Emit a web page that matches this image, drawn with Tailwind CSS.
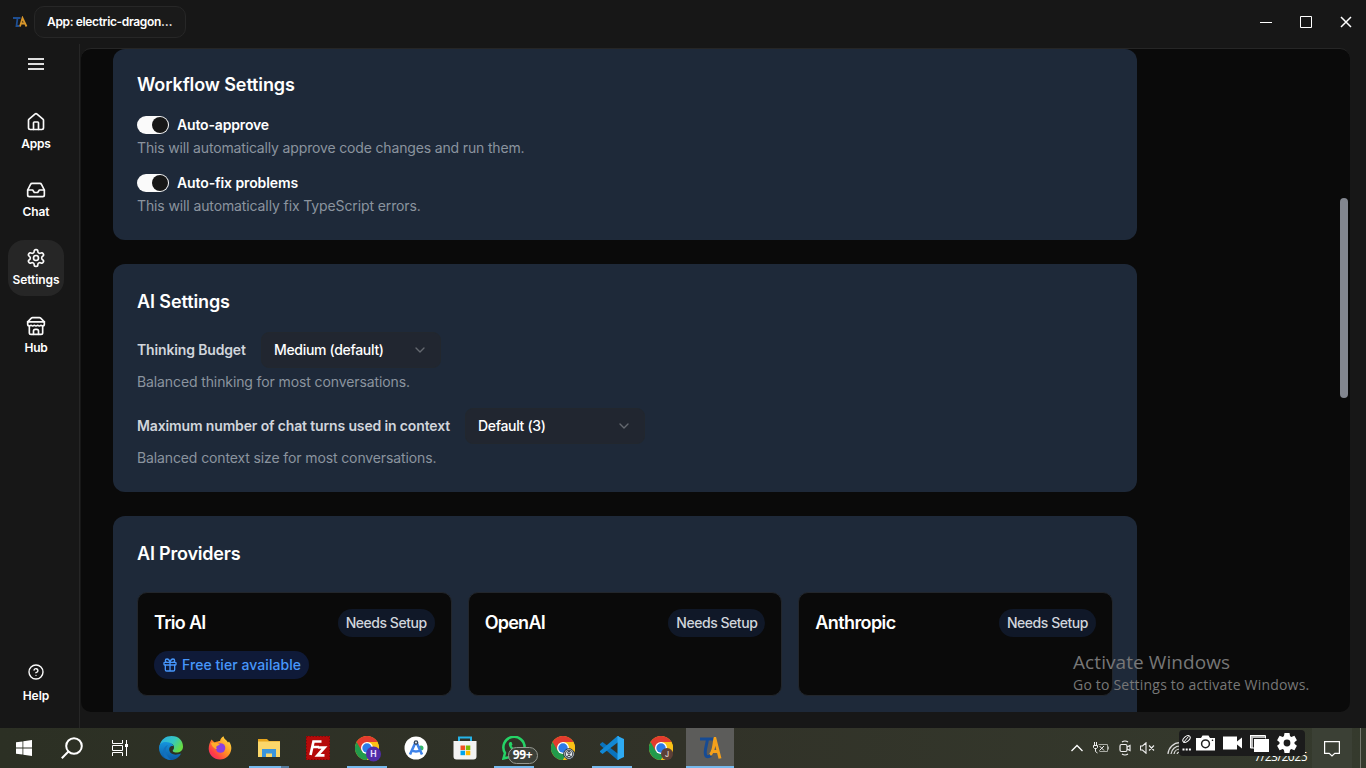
<!DOCTYPE html>
<html lang="en">
<head>
<meta charset="utf-8">
<title>Settings</title>
<script src="https://cdn.jsdelivr.net/npm/@tailwindcss/browser@4"></script>
</head>
<body class="w-[1366px] h-[768px] overflow-hidden bg-[#171717] text-white font-['Inter','Liberation_Sans',sans-serif] flex flex-col relative">
<header class="h-[44px] shrink-0 flex items-center pl-[13px]">
  <svg class="w-[15px] h-[12px] shrink-0 mr-[6px]" viewBox="0 0 15 12" fill="none" stroke-width="1.800"><path d="M0 2h7.500M4.500 2L3.500 10h3" stroke="#1f4f93"/><path d="M7 10.500L9.500 2L13.500 10.500M8 7.500h4.500" stroke="#d8962b"/></svg>
  <div class="w-[152px] h-8 rounded-[10px] border border-[#272727] bg-[#1a1a1a] px-3 flex items-center text-[12px] font-semibold whitespace-nowrap"><span class="tracking-[-0.35px]">App: electric-dragon…</span></div>
  <div class="ml-auto flex items-center gap-7 pr-[14px]">
    <svg class="w-3 h-3" viewBox="0 0 12 12" stroke="#fff"><path d="M0 6.500h12"/></svg>
    <svg class="w-3 h-3" viewBox="0 0 12 12" stroke="#fff" fill="none"><path d="M.5.500h11v11H.5z"/></svg>
    <svg class="w-3 h-3" viewBox="0 0 12 12" stroke="#fff" stroke-width="1.500"><path d="M1 1l10 10M11 1L1 11"/></svg>
  </div>
</header>
<div class="h-[684px] flex shrink-0">
  <nav class="w-20 shrink-0 border-r border-[#262626] flex flex-col pl-2 text-[12px] font-semibold">
    <div class="w-14 h-10 flex items-center justify-center"><svg class="w-4 h-3" viewBox="0 0 16 12" fill="#dedede"><path d="M0 0h16v2H0zM0 5h16v2H0zM0 10h16v2H0z"/></svg></div>
    <div class="mt-5 flex flex-col gap-3">
      <div class="w-14 h-14 flex flex-col items-center pt-2 gap-1"><svg class="w-5 h-5" viewBox="0 0 24 24" fill="none" stroke="#fafafa" stroke-width="2" stroke-linecap="round" stroke-linejoin="round"><path d="M15 21v-8a1 1 0 0 0-1-1h-4a1 1 0 0 0-1 1v8"/><path d="M3 10a2 2 0 0 1 .709-1.528l7-5.999a2 2 0 0 1 2.582 0l7 5.999A2 2 0 0 1 21 10v9a2 2 0 0 1-2 2H5a2 2 0 0 1-2-2z"/></svg><span class="leading-4 tracking-[-0.2px]">Apps</span></div>
      <div class="w-14 h-14 flex flex-col items-center pt-2 gap-1"><svg class="w-5 h-5" viewBox="0 0 24 24" fill="none" stroke="#fafafa" stroke-width="2" stroke-linecap="round" stroke-linejoin="round"><path d="M22 12h-6l-2 3h-4l-2-3H2"/><path d="M5.450 5.110 2 12v6a2 2 0 0 0 2 2h16a2 2 0 0 0 2-2v-6l-3.450-6.890A2 2 0 0 0 16.760 4H7.240a2 2 0 0 0-1.790 1.110z"/></svg><span class="leading-4 tracking-[-0.1px]">Chat</span></div>
      <div class="w-14 h-14 flex flex-col items-center pt-2 gap-1 rounded-2xl bg-[#262626]"><svg class="w-5 h-5" viewBox="0 0 24 24" fill="none" stroke="#fafafa" stroke-width="2" stroke-linecap="round" stroke-linejoin="round"><path d="M12.220 2h-.44a2 2 0 0 0-2 2v.18a2 2 0 0 1-1 1.730l-.43.25a2 2 0 0 1-2 0l-.15-.08a2 2 0 0 0-2.730.73l-.22.38a2 2 0 0 0 .73 2.730l.15.1a2 2 0 0 1 1 1.720v.51a2 2 0 0 1-1 1.740l-.15.09a2 2 0 0 0-.73 2.730l.22.38a2 2 0 0 0 2.730.73l.15-.08a2 2 0 0 1 2 0l.43.25a2 2 0 0 1 1 1.730V20a2 2 0 0 0 2 2h.44a2 2 0 0 0 2-2v-.18a2 2 0 0 1 1-1.730l.43-.25a2 2 0 0 1 2 0l.15.08a2 2 0 0 0 2.730-.73l.22-.39a2 2 0 0 0-.73-2.730l-.15-.08a2 2 0 0 1-1-1.740v-.5a2 2 0 0 1 1-1.740l.15-.09a2 2 0 0 0 .73-2.730l-.22-.38a2 2 0 0 0-2.730-.73l-.15.08a2 2 0 0 1-2 0l-.43-.25a2 2 0 0 1-1-1.730V4a2 2 0 0 0-2-2z"/><circle cx="12" cy="12" r="3"/></svg><span class="leading-4 tracking-[-0.1px]">Settings</span></div>
      <div class="w-14 h-14 flex flex-col items-center pt-2 gap-1"><svg class="w-5 h-5" viewBox="0 0 24 24" fill="none" stroke="#fafafa" stroke-width="2" stroke-linecap="round" stroke-linejoin="round"><path d="m2 7 4.410-4.410A2 2 0 0 1 7.830 2h8.340a2 2 0 0 1 1.420.59L22 7"/><path d="M4 12v8a2 2 0 0 0 2 2h12a2 2 0 0 0 2-2v-8"/><path d="M15 22v-4a2 2 0 0 0-2-2h-2a2 2 0 0 0-2 2v4M2 7h20"/><path d="M22 7v3a2 2 0 0 1-2 2a2.700 2.700 0 0 1-1.590-.63.7.7 0 0 0-.82 0A2.700 2.700 0 0 1 16 12a2.700 2.700 0 0 1-1.590-.63.7.7 0 0 0-.82 0A2.700 2.700 0 0 1 12 12a2.700 2.700 0 0 1-1.590-.63.7.7 0 0 0-.82 0A2.700 2.700 0 0 1 8 12a2.700 2.700 0 0 1-1.590-.63.7.7 0 0 0-.82 0A2.700 2.700 0 0 1 4 12a2 2 0 0 1-2-2V7"/></svg><span class="leading-4 tracking-[-0.2px]">Hub</span></div>
    </div>
    <div class="mt-auto mb-6 w-14 flex flex-col items-center gap-2"><svg class="w-4 h-4" viewBox="0 0 24 24" fill="none" stroke="#fafafa" stroke-width="2.100" stroke-linecap="round" stroke-linejoin="round"><circle cx="12" cy="12" r="10.500"/><path d="M9.090 9a3 3 0 0 1 5.830 1c0 2-3 3-3 3M12 17h.01"/></svg><span class="leading-4">Help</span></div>
  </nav>
  <main class="ml-px mt-1 w-[1269px] h-[664px] rounded-[10px] border-t border-[#262626] bg-[#0a0a0a] overflow-hidden flex">
    <div class="ml-8 w-[1024px] shrink-0 text-[14px] leading-5">
      <section class="h-[191px] rounded-xl bg-[#1e2939] px-6 pt-[22px]">
        <h2 class="text-[18px] leading-7 font-[580]"><span class="tracking-[-0.1px]">Workflow Settings</span></h2>
        <div class="mt-4 h-5 flex items-center gap-2"><span class="w-8 h-[18.400px] rounded-full bg-[#fafafa] flex items-center justify-end pr-px"><i class="w-4 h-4 rounded-full bg-[#171717]"></i></span><span class="font-[570] tracking-[-0.16px]">Auto-approve</span></div>
        <p class="mt-[3px] text-[#8b949f]"><span class="tracking-[-0.155px]">This will automatically approve code changes and run them.</span></p>
        <div class="mt-[15px] h-5 flex items-center gap-2"><span class="w-8 h-[18.400px] rounded-full bg-[#fafafa] flex items-center justify-end pr-px"><i class="w-4 h-4 rounded-full bg-[#171717]"></i></span><span class="font-[570] tracking-[-0.1px]">Auto-fix problems</span></div>
        <p class="mt-[3px] text-[#8b949f]"><span class="tracking-[-0.115px]">This will automatically fix TypeScript errors.</span></p>
      </section>
      <section class="mt-6 h-[228px] rounded-xl bg-[#1e2939] px-6 pt-6">
        <h2 class="text-[18px] leading-7 font-[580] tracking-[-0.1px]">AI Settings</h2>
        <div class="mt-4 h-9 flex items-center"><span class="w-[124px] font-[560] tracking-[-0.15px] text-[#d1d5dc]">Thinking Budget</span>
          <div class="w-[180px] h-9 rounded-lg border border-[#22272e] bg-[#212630] px-3 flex items-center justify-between font-[540]"><span class="tracking-[-0.32px]">Medium (default)</span><svg class="w-4 h-4" viewBox="0 0 24 24" fill="none" stroke="#646870" stroke-width="2" stroke-linecap="round" stroke-linejoin="round"><path d="m6 9 6 6 6-6"/></svg></div></div>
        <p class="mt-1 text-[#8b949f]"><span class="tracking-[-0.11px]">Balanced thinking for most conversations.</span></p>
        <div class="mt-4 h-9 flex items-center"><span class="w-[328px] font-[560] tracking-[-0.14px] text-[#d1d5dc] whitespace-nowrap">Maximum number of chat turns used in context</span>
          <div class="w-[180px] h-9 rounded-lg border border-[#22272e] bg-[#212630] px-3 flex items-center justify-between font-[540]"><span class="tracking-[-0.32px]">Default (3)</span><svg class="w-4 h-4" viewBox="0 0 24 24" fill="none" stroke="#646870" stroke-width="2" stroke-linecap="round" stroke-linejoin="round"><path d="m6 9 6 6 6-6"/></svg></div></div>
        <p class="mt-1 text-[#8b949f]"><span class="tracking-[-0.12px]">Balanced context size for most conversations.</span></p>
      </section>
      <section class="mt-6 h-[240px] rounded-xl bg-[#1e2939] px-6 pt-6">
        <h2 class="text-[18px] leading-7 font-[580] tracking-[-0.2px]">AI Providers</h2>
        <div class="mt-6 grid grid-cols-3 gap-4">
          <div class="h-[104px] rounded-[10px] border border-[#22262c] bg-[#0a0a0a] p-4">
            <div class="h-7 flex items-center justify-between"><h3 class="text-[18px] font-[570] tracking-[-0.7px]">Trio AI</h3><span class="h-7 px-2 rounded-full bg-[#101828] text-[#d1d5dc] font-medium leading-7 tracking-[-0.46px]">Needs Setup</span></div>
            <div class="mt-[14px] w-[155px] h-7 px-2 rounded-full bg-[#0f1a38] text-[#4797fb] font-medium flex items-center gap-1 whitespace-nowrap"><svg class="w-4 h-4 shrink-0" viewBox="0 0 24 24" fill="none" stroke="currentColor" stroke-width="2" stroke-linecap="round" stroke-linejoin="round"><rect x="3" y="8" width="18" height="4" rx="1"/><path d="M12 8v13M19 12v7a2 2 0 0 1-2 2H7a2 2 0 0 1-2-2v-7M7.500 8a2.500 2.500 0 0 1 0-5A4.800 8 0 0 1 12 8a4.800 8 0 0 1 4.500-5 2.500 2.500 0 0 1 0 5"/></svg><span class="tracking-[0.06px]">Free tier available</span></div>
          </div>
          <div class="h-[104px] rounded-[10px] border border-[#22262c] bg-[#0a0a0a] p-4">
            <div class="h-7 flex items-center justify-between"><h3 class="text-[18px] font-[570] tracking-[-0.75px]">OpenAI</h3><span class="h-7 px-2 rounded-full bg-[#101828] text-[#d1d5dc] font-medium leading-7 tracking-[-0.46px]">Needs Setup</span></div>
          </div>
          <div class="h-[104px] rounded-[10px] border border-[#22262c] bg-[#0a0a0a] p-4">
            <div class="h-7 flex items-center justify-between"><h3 class="text-[18px] font-[570] tracking-[-0.6px]">Anthropic</h3><span class="h-7 px-2 rounded-full bg-[#101828] text-[#d1d5dc] font-medium leading-7 tracking-[-0.46px]">Needs Setup</span></div>
          </div>
        </div>
      </section>
    </div>
    <div class="ml-auto mr-[2px] mt-[149px] w-2 h-[200px] rounded-full bg-[#82868f]"></div>
  </main>
</div>
<footer class="h-10 shrink-0 bg-linear-to-r from-[#2c3024] via-[#313228] to-[#353a2d] flex items-center">
  <div class="w-12 flex justify-center"><svg class="w-4 h-4" viewBox="0 0 16 16" fill="#fff"><path d="M0 2.300L6.500 1.400V7.600H0zM7.300 1.300L16 0V7.600H7.300zM0 8.400H6.500V14.600L0 13.700zM7.300 8.400H16V16L7.300 14.700z"/></svg></div>
  <div class="w-12 flex justify-center"><svg class="w-[22px] h-[22px]" viewBox="0 0 22 22" fill="none" stroke="#fff" stroke-width="2"><circle cx="13" cy="9" r="7.800"/><path d="M7.700 14.300L.8 21.200"/></svg></div>
  <div class="w-12 flex justify-center"><svg class="w-4 h-4" viewBox="0 0 16 16" fill="none" stroke="#fff"><path d="M.5 0v3.500h10V0M.5 16v-3.500h10V16M.5 5.500v5h10v-5zM14.500 0v16"/><path d="M13 4h3v3h-3z" fill="#fff" stroke="none"/></svg></div>
  <div class="w-[3px]"></div>
  <div class="w-[49px] flex justify-center"><svg class="w-6 h-6" viewBox="0 0 24 24"><defs><linearGradient id="eg" x1="0" y1="0" x2="1" y2=".5"><stop offset="0" stop-color="#28a9e8"/><stop offset=".6" stop-color="#35c7c0"/><stop offset="1" stop-color="#66dc45"/></linearGradient><linearGradient id="eb" x1="0" y1="0" x2="0" y2="1"><stop offset="0" stop-color="#1595dd"/><stop offset="1" stop-color="#0c59a4"/></linearGradient></defs><path d="M.5 10C2 3 7 0 12.500 0 20 0 24 5 24 10.500c0 4-3 6-6.500 6-3 0-4.500-1.500-3.500-2.500 2-2 1-6.500-3-6.500C6 7.500 2 7 .5 10z" fill="url(#eg)"/><path d="M0 12C0 7.500 3.500 5.800 7.500 6c4 .2 6 2 7 4-3-.5-5 1.500-4 5 1 3 5 5 11.500 2.500C20 21.500 16.500 24 12 24 5 24 0 18.500 0 12z" fill="url(#eb)"/><path d="M9 9c-4 4-2.500 11 3 15-6 0-8-4-8-8 0-3 2-6 5-7z" fill="#1270bd"/></svg></div>
  <div class="w-[49px] flex justify-center"><svg class="w-6 h-6" viewBox="0 0 24 24"><defs><linearGradient id="ff" x1="1" y1="0" x2="0" y2="1"><stop offset="0" stop-color="#fff04a"/><stop offset=".45" stop-color="#ff9324"/><stop offset=".75" stop-color="#ff3e45"/><stop offset="1" stop-color="#e91e7f"/></linearGradient></defs><path d="M3.500 3.500l3 3C9 5.500 11 5 12 5c.5-2.500 2-4 3.500-4.700.5 3 3 3.700 4.500 6.200l1-1C23 8 23.500 11 23.300 13 22.500 19 18 23.500 12 23.500S1 19 .7 13c0-3.500 1-6.500 2.800-9.500z" fill="url(#ff)"/><circle cx="12.500" cy="12" r="4.800" fill="#8a3fe0"/><path d="M3 7c4-1 6 0 9 1.500L9 10c-1 .5-1 2 0 3-2 0-5-2-6-6z" fill="#ffad2b"/></svg></div>
  <div class="w-[49px] h-10 flex justify-center items-center relative"><svg class="w-[22px] h-5 mb-px" viewBox="0 0 22 20"><path d="M0 1h9l2 2h11v16H0z" fill="#e7a51c"/><path d="M0 3.500h22V19H0z" fill="#fbd76a"/><path d="M4 19v-8h14v8h-4v-3.500H8V19z" fill="#3a95dc"/></svg><i class="absolute left-[4px] bottom-0 h-[2px] w-[32px] bg-[#76b9ed]"></i><i class="absolute left-[36px] bottom-0 h-[2px] w-[8px] bg-[#557c9d]"></i></div>
  <div class="w-[49px] flex justify-center"><svg class="w-6 h-6" viewBox="0 0 24 24"><path d="M0 0h24v24H0z" fill="#b50a0a"/><path d="M.5.500h23v23H.5z" fill="none" stroke="#820707" stroke-dasharray="1.500"/><path d="M4.500 19L7.500 5.500h8M6.500 11h6.500M12 11.500h6.500l-7 7.800h7" fill="none" stroke="#fff" stroke-width="2.700"/></svg></div>
  <div class="w-[49px] h-10 flex justify-center items-center relative"><svg class="w-[26px] h-[26px] ml-[2px] mt-[2px]" viewBox="0 0 26 26"><use href="#chrome"/><circle cx="18.500" cy="18" r="7.500" fill="#512da8"/><text x="18.500" y="21" font-size="8.500" font-weight="700" fill="#e8dcff" text-anchor="middle">H</text></svg><i class="absolute left-[4px] bottom-0 h-[2px] w-10 bg-[#76b9ed]"></i></div>
  <div class="w-[49px] flex justify-center"><svg class="w-6 h-6" viewBox="0 0 24 24"><circle cx="12" cy="12" r="11.500" fill="#fff"/><circle cx="17" cy="12" r="2.500" fill="#35b66c"/><path d="M6 18.500l5-11h2l5 11M7 14q5 3 10 0" fill="none" stroke="#3f83ea" stroke-width="2.600"/><circle cx="12" cy="6.500" r="2.300" fill="#31445b"/><circle cx="12" cy="6.500" r=".9" fill="#fff"/></svg></div>
  <div class="w-[49px] flex justify-center"><svg class="w-6 h-6" viewBox="0 0 24 24"><path d="M6 6V1.500h12V6" fill="none" stroke="#25b4e8" stroke-width="2"/><path d="M.5 5h23v15.500a3 3 0 0 1-3 3h-17a3 3 0 0 1-3-3z" fill="#f3f3f3"/><path d="M7.500 9.500H12V14H7.500z" fill="#f25022"/><path d="M12.800 9.500h4.500V14h-4.500z" fill="#7fba00"/><path d="M7.500 14.700H12v4.500H7.500z" fill="#00a4ef"/><path d="M12.800 14.700h4.500v4.500h-4.500z" fill="#ffb900"/></svg></div>
  <div class="w-[49px] h-10 flex justify-center items-center relative"><svg class="w-6 h-6" viewBox="0 0 24 24"><path d="M1.500 22.500L3 17A10.600 10.600 0 1 1 7.500 21z" fill="none" stroke="#25d366" stroke-width="2.500"/><path d="M8 6c-3 2 0 7 3.500 9.500S18 17 17.500 14L15 12.500 13.500 14 9.500 10 10.500 8.500 9.500 6z" fill="#25d366"/></svg><i class="absolute left-[4px] bottom-0 h-[2px] w-10 bg-[#76b9ed]"></i><span class="absolute left-[18px] top-[19px] w-[30px] h-[17px] rounded-full border border-[#969991] bg-[#3c4038] text-[12px] leading-[14px] text-center font-bold font-['Noto_Sans',sans-serif] tracking-[-0.4px]">99+</span></div>
  <div class="w-[49px] flex justify-center"><svg class="w-6 h-6" viewBox="0 0 24 24"><defs><g id="chrome"><circle cx="12" cy="12" r="12" fill="#fbc116"/><path d="M1.600 6A12 12 0 0 0 12 24l5.200-9z" fill="#229a4b"/><path d="M12 6h10.400A12 12 0 0 0 1.600 6l5.200 9z" fill="#e33b2e"/><path d="M12 24A12 12 0 0 0 22.400 6H12l5.200 9z" fill="#fbc116"/><circle cx="12" cy="12" r="6" fill="#fff"/><circle cx="12" cy="12" r="4.700" fill="#2c7be8"/></g></defs><use href="#chrome"/><circle cx="18" cy="18" r="5.300" fill="#e4e8eb" stroke="#29323a"/><circle cx="18" cy="18" r="3.800" fill="none" stroke="#29323a" stroke-width=".9"/><circle cx="18" cy="16.800" r="1.300" fill="none" stroke="#29323a"/><path d="M15.500 20.800q2.500-3 5 0" fill="none" stroke="#29323a"/></svg></div>
  <div class="w-[49px] h-10 flex justify-center items-center relative"><svg class="w-6 h-6" viewBox="0 0 24 24"><path d="M0 8l2.500-2L19 18.500V24h-1.500L0 9z" fill="#0a73bd"/><path d="M0 16l2.500 2L19 5.500V0h-1.500L0 15z" fill="#1288d4"/><path d="M17.500 0L24 3v18l-6.500 3z" fill="#2eaaf2"/></svg><i class="absolute left-[5px] bottom-0 h-[2px] w-10 bg-[#76b9ed]"></i></div>
  <div class="w-[50px] flex justify-center"><svg class="w-6 h-6" viewBox="0 0 24 24"><use href="#chrome"/><circle cx="18" cy="18" r="6" fill="#5d4037"/><text x="18" y="20.500" font-size="7" font-weight="700" fill="#cfc0ba" text-anchor="middle">J</text></svg></div>
  <div class="w-12 h-10 bg-[#5c5c5a] border-b-2 border-[#76b9ed] flex justify-center items-center"><svg class="w-[22px] h-[22px] ml-[2px] mt-[2px]" viewBox="0 0 22 22" fill="none" stroke-width="3"><path d="M0 2h13M7.500 2C7 8 3.500 15 6 19q2 1.500 5-.5" stroke="#164b94"/><path d="M10 17.500c4-2 3.500-10 5-15.500l5 19.500M11 14.500h8" stroke="#f5a11b"/></svg></div>
  <div class="ml-auto w-[632px] h-10 flex items-center pl-[337px]">
    <svg class="w-3 h-2 shrink-0" viewBox="0 0 12 8" fill="none" stroke="#fff" stroke-width="1.300"><path d="M.5 7L6 1.500 11.500 7"/></svg>
    <svg class="ml-[10px] w-4 h-3 shrink-0" viewBox="0 0 16 12" fill="none" stroke="#eee"><path d="M5.500 2.500h9v7h-8" stroke="#a9aba4"/><path d="M15.500 4.500v3" stroke="#a9aba4"/><path d="M.5 3.500h4v2l-1 1h-2l-1-1zM1.500 0v3M3.500 0v3M2.500 6.500v3l2 1.500"/><path d="M6.500 4l4.500 4.500M11 4L6.500 8.500"/></svg>
    <svg class="ml-[10px] w-3 h-4 shrink-0" viewBox="0 0 12 16" fill="none" stroke="#eee" stroke-width="1.200"><rect x="1" y="4.500" width="7" height="7" rx="1.500"/><path d="M8 7l3-1.500v5L8 9M3 2q3-2 6 0M3 14q3 2 6 0"/></svg>
    <svg class="ml-[9px] w-[15px] h-3 shrink-0" viewBox="0 0 15 12" fill="none" stroke="#eee" stroke-width="1.100"><path d="M.5 4h2L6 .8v10.400L2.500 8h-2zM9 3.500l5 5M14 3.500l-5 5"/></svg>
    <svg class="ml-[12px] w-[13px] h-3 shrink-0" viewBox="0 0 13 12" fill="none" stroke="#ddd" stroke-width="1.200"><path d="M1 12A12 12 0 0 1 13 .7M4 12a9 9 0 0 1 9-8M7 12a6 6 0 0 1 6-5M10 12a3 3 0 0 1 3-2"/></svg>
    <div class="relative ml-[-1px] w-[126px] h-10 shrink-0"><span class="absolute left-[75px] top-[20px] whitespace-nowrap text-[12px] leading-[18px] tracking-[-0.45px] font-['Open_Sans',sans-serif]">7/23/2025</span>
      <div class="absolute left-0 top-[2px] w-[126px] h-[26px] rounded bg-[#1b1b1b] flex items-center">
        <svg class="ml-[3px] w-[9px] h-[18px] shrink-0" viewBox="0 0 9 18" fill="none" stroke="#fff"><path d="M1.500 8.500L6.500 2.500"/><ellipse cx="4.500" cy="5" rx="4.200" ry="2.600" transform="rotate(-40 4.500 5)"/><path d="M.5 15.500h2M3.700 15.500h2M6.900 15.500h2" stroke-width="2"/></svg>
        <svg class="ml-[5px] w-[19px] h-4 shrink-0" viewBox="0 0 19 16"><path d="M0 3h5l1.500-2.500h6L14 3h5v12.500H0z" fill="#fff"/><circle cx="9.500" cy="8.800" r="3.900" fill="none" stroke="#202020" stroke-width="1.500"/><circle cx="16.500" cy="5.300" r=".8"/></svg>
        <svg class="ml-[8px] w-[19px] h-[14px] shrink-0" viewBox="0 0 19 14" fill="#fff"><path d="M0 .5h14v13H0zM14 5.500l5-4v11l-5-4z"/></svg>
        <svg class="ml-[8px] w-[19px] h-[17px] shrink-0" viewBox="0 0 19 17"><path d="M0 0h15v3H3v10H0z" fill="#bbb"/><path d="M4 4h15v13H4z" fill="#fff"/><path d="M0 .5h15.500v3M.5 0v13H4" fill="none" stroke="#fff"/></svg>
        <svg class="ml-[8px] w-5 h-5 shrink-0" viewBox="0 0 20 20"><g fill="#fff"><circle cx="10" cy="10" r="7.500"/><path id="tooth" d="M7.500 0h5l.7 4H6.800zM7.500 20h5l.7-4H6.800z"/><use href="#tooth" transform="rotate(60 10 10)"/><use href="#tooth" transform="rotate(120 10 10)"/></g><circle cx="10" cy="10" r="3.400" fill="#1b1b1b"/></svg>
      </div>
    </div>
    <div class="ml-[7px] w-10 h-10 bg-[#3b4035] flex items-center justify-center shrink-0"><svg class="w-4 h-[17px]" viewBox="0 0 16 17" fill="none" stroke="#fff" stroke-width="1.200"><path d="M.6 1.600h14.800v11.800h-4.600L8 16l-2.800-2.600H.6z"/></svg></div>
    <div class="ml-2 h-10 w-px bg-[#777a70] shrink-0"></div>
  </div>
</footer>
<div class="absolute left-[1073px] top-[650px] whitespace-nowrap text-[#777777] font-['Open_Sans',sans-serif]">
  <div class="text-[19px] leading-6"><span class="tracking-[0.08px]">Activate Windows</span></div>
  <div class="text-[14px] leading-[22px]"><span class="tracking-[0.2px]">Go to Settings to activate Windows.</span></div>
</div>
</body>
</html>
